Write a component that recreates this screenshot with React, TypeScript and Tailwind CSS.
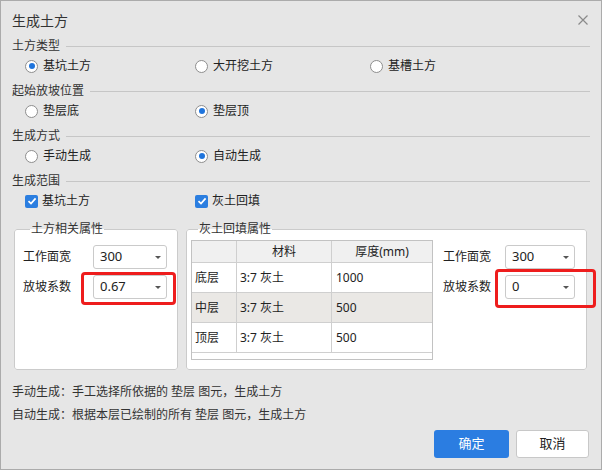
import React from 'react';

const FONT = "font-['Noto_Sans','Noto_Sans_CJK_SC',sans-serif]";

function Radio({ label, checked }: { label: string; checked?: boolean }) {
  return (
    <div className="flex items-center gap-[5px]">
      <span className="w-[13px] h-[13px] rounded-full border border-[#8e8e8e] bg-white flex items-center justify-center">
        {checked && <span className="w-[6px] h-[6px] rounded-full bg-[#1f74dc]" />}
      </span>
      <span className="text-[12px] text-[#222]">{label}</span>
    </div>
  );
}

function Check({ label }: { label: string }) {
  return (
    <div className="flex items-center gap-[4px]">
      <span className="w-[13px] h-[13px] rounded-[2px] bg-[#2b7ee0] flex items-center justify-center">
        <svg width="10" height="10" viewBox="0 0 10 10">
          <path d="M1.5 5.2 L4 7.6 L8.6 2.4" fill="none" stroke="#fff" strokeWidth="1.7" />
        </svg>
      </span>
      <span className="text-[12px] text-[#222]">{label}</span>
    </div>
  );
}

function Section({ title, children }: { title: string; children: React.ReactNode }) {
  return (
    <div className="flex flex-col">
      <div className="h-[20px] flex items-center">
        <span className="text-[12px] text-[#333]">{title}</span>
        <span className="flex-1 h-px bg-[#c6c6c6] ml-[6px]" />
      </div>
      <div className="h-[20px] flex items-center pl-[13px]">{children}</div>
    </div>
  );
}

function Select({ value, width }: { value: string; width: string }) {
  return (
    <div className={`${width} h-[24px] bg-white border border-[#cacaca] rounded-[3px] flex items-center justify-between pl-[6px] pr-[5px]`}>
      <span className="text-[13px] text-[#222]">{value}</span>
      <span className="w-0 h-0 border-l-[3px] border-r-[3px] border-t-[3px] border-l-transparent border-r-transparent border-t-[#555]" />
    </div>
  );
}

const rows = [
  { name: '底层', mat: '3:7 灰土', t: '1000', bg: 'bg-white' },
  { name: '中层', mat: '3:7 灰土', t: '500', bg: 'bg-[#eae8e5]' },
  { name: '顶层', mat: '3:7 灰土', t: '500', bg: 'bg-white' },
];

export default function App() {
  return (
    <div className={`${FONT} relative w-[602px] h-[470px] border border-[#ababab] bg-[#e6e6e6] flex flex-col`}>
      <div className="h-[35px] pt-[3px] flex items-center justify-between pl-[11px] pr-[13px]">
        <span className="text-[14px] text-[#333]">生成土方</span>
        <svg width="10" height="10" viewBox="0 0 10 10">
          <path d="M0.5 0.5 L9.5 9.5 M9.5 0.5 L0.5 9.5" stroke="#8a8a8a" strokeWidth="1.2" />
        </svg>
      </div>

      <div className="flex flex-col gap-[5px] px-[11px]">
        <Section title="土方类型">
          <div className="w-[170px]"><Radio label="基坑土方" checked /></div>
          <div className="w-[175px]"><Radio label="大开挖土方" /></div>
          <Radio label="基槽土方" />
        </Section>
        <Section title="起始放坡位置">
          <div className="w-[170px]"><Radio label="垫层底" /></div>
          <Radio label="垫层顶" checked />
        </Section>
        <Section title="生成方式">
          <div className="w-[170px]"><Radio label="手动生成" /></div>
          <Radio label="自动生成" checked />
        </Section>
        <Section title="生成范围">
          <div className="w-[170px]"><Check label="基坑土方" /></div>
          <Check label="灰土回填" />
        </Section>
      </div>

      <div className="flex gap-[8px] px-[13px] mt-[9px]">
        <fieldset className="w-[164px] h-[150px] border border-[#cbcbcb] rounded-[3px] bg-white pl-[8px] pt-[7px]">
          <legend className="ml-[7px] px-[1px] text-[12px] leading-[18px] text-[#333]">土方相关属性</legend>
          <div className="flex flex-col gap-[6px]">
            <div className="h-[24px] flex items-center">
              <span className="w-[70px] text-[12px] text-[#222]">工作面宽</span>
              <Select value="300" width="w-[74px]" />
            </div>
            <div className="h-[24px] flex items-center">
              <span className="w-[70px] text-[12px] text-[#222]">放坡系数</span>
              <Select value="0.67" width="w-[74px]" />
            </div>
          </div>
        </fieldset>

        <fieldset className="w-[401px] h-[150px] border border-[#cbcbcb] rounded-[3px] bg-white pl-[4px] pt-[2px]">
          <legend className="ml-[7px] px-[1px] text-[12px] leading-[18px] text-[#333]">灰土回填属性</legend>
          <div className="flex">
            <div className="w-[242px] h-[120px] border border-[#c2c2c2] bg-white flex flex-col text-[12px] text-[#222]">
              <div className="grid grid-cols-[45px_95px_1fr] h-[22px] bg-[#f0f0f0] border-b border-[#cfcfcf]">
                <div className="border-r border-[#cfcfcf]" />
                <div className="border-r border-[#cfcfcf] flex items-center justify-center">材料</div>
                <div className="flex items-center justify-center">厚度(mm)</div>
              </div>
              {rows.map((r) => (
                <div key={r.name} className={`grid grid-cols-[45px_95px_1fr] h-[30px] border-b border-[#cfcfcf] ${r.bg}`}>
                  <div className="border-r border-[#cfcfcf] flex items-center pl-[3px]">{r.name}</div>
                  <div className="border-r border-[#cfcfcf] flex items-center pl-[3px]">{r.mat}</div>
                  <div className="flex items-center pl-[4px]">{r.t}</div>
                </div>
              ))}
            </div>
            <div className="ml-[10px] pt-[5px] flex flex-col gap-[6px]">
              <div className="h-[24px] flex items-center">
                <span className="w-[62px] text-[12px] text-[#222]">工作面宽</span>
                <Select value="300" width="w-[70px]" />
              </div>
              <div className="h-[24px] flex items-center">
                <span className="w-[62px] text-[12px] text-[#222]">放坡系数</span>
                <Select value="0" width="w-[70px]" />
              </div>
            </div>
          </div>
        </fieldset>
      </div>

      <div className="mt-[10px] px-[11px] text-[12px] leading-[23px] text-[#333]">
        <div>手动生成：手工选择所依据的 垫层 图元，生成土方</div>
        <div>自动生成：根据本层已绘制的所有 垫层 图元，生成土方</div>
      </div>

      <div className="mt-[4px] flex justify-end gap-[7px] pr-[12px]">
        <button className="w-[75px] h-[28px] rounded-[3px] bg-[#2b7de1] text-white text-[13px]">确定</button>
        <button className="w-[73px] h-[28px] rounded-[3px] bg-white border border-[#c8c8c8] text-[#222] text-[13px]">取消</button>
      </div>

      <div className="absolute left-[80px] top-[271px] w-[95px] h-[33px] border-[3px] border-[#ee1d1d] rounded-[4px]" />
      <div className="absolute left-[494px] top-[268px] w-[101px] h-[39px] border-[3px] border-[#ee1d1d] rounded-[4px]" />
    </div>
  );
}
